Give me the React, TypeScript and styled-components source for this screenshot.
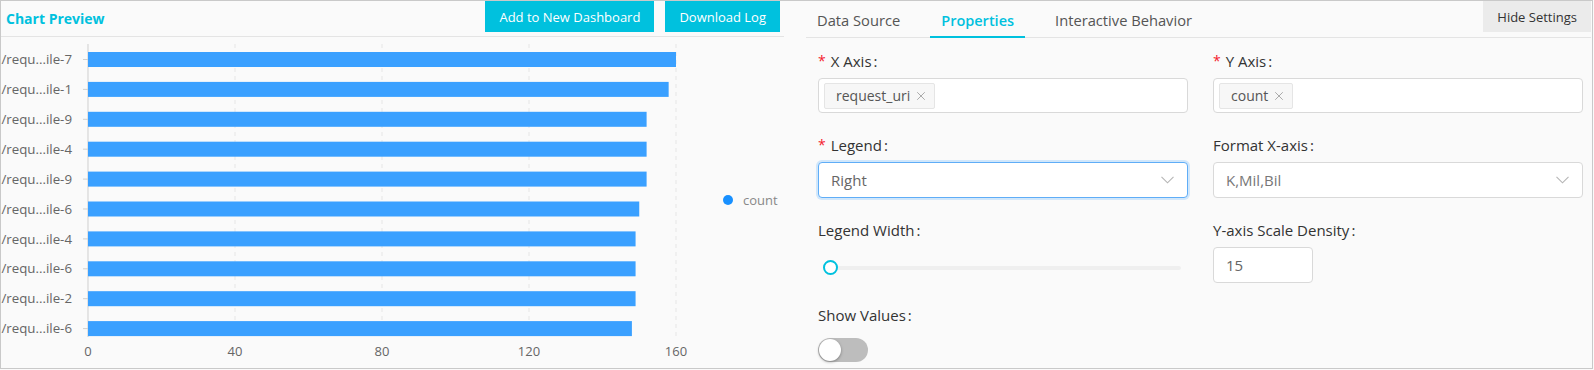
import React from 'react'
import styled, { createGlobalStyle } from 'styled-components'
import { X } from 'lucide-react'

const GlobalStyle = createGlobalStyle`
  * {
    box-sizing: border-box;
  }
  body {
    margin: 0;
    background: #fafafa;
    font-family: 'Open Sans', 'Liberation Sans', sans-serif;
    color: #333;
  }
`

const Frame = styled.div`
  display: flex;
  width: 1593px;
  height: 369px;
  border: 1px solid #c9c9c9;
  background: #fafafa;
  overflow: hidden;
`

const PreviewPane = styled.section`
  display: flex;
  flex-direction: column;
  flex: 0 0 783px;
`

const PreviewHeader = styled.div`
  display: flex;
  align-items: flex-start;
  flex: 0 0 36px;
  padding: 0 4px 0 5px;
  border-bottom: 1px solid #e4e4e4;
`

const PreviewTitle = styled.h1`
  margin: 0 auto 0 0;
  font-size: 14px;
  font-weight: 700;
  line-height: 35px;
  color: #00c1de;
`

const ActionButton = styled.button`
  height: 31px;
  margin-left: 11px;
  padding: 0 14px;
  border: 0;
  background: #00c1de;
  color: #fff;
  font-family: inherit;
  font-size: 13px;
  cursor: pointer;
`

const ChartArea = styled.div`
  flex: 1;
  min-height: 0;

  svg {
    display: block;
  }
`

const SettingsPane = styled.section`
  display: flex;
  flex-direction: column;
  flex: 1;
  min-width: 0;
  padding: 0 1px 0 22px;
`

const TabBar = styled.div`
  display: flex;
  flex: 0 0 37px;
  border-bottom: 1px solid #e4e4e4;
`

const Tab = styled.div<{ $active?: boolean }>`
  display: flex;
  align-items: center;
  margin: 0 19px -1px 0;
  padding: 3px 11px 0;
  border-bottom: 2px solid ${(p) => (p.$active ? '#00c1de' : 'transparent')};
  font-size: ${(p) => (p.$active ? '14.5px' : '14.7px')};
  font-weight: ${(p) => (p.$active ? 600 : 400)};
  color: ${(p) => (p.$active ? '#00c1de' : '#555')};
  cursor: pointer;
`

const HideButton = styled.button`
  align-self: flex-start;
  height: 31px;
  margin-left: auto;
  padding: 0 14px;
  border: 0;
  background: #ebebeb;
  color: #333;
  font-family: inherit;
  font-size: 13px;
  cursor: pointer;
`

const Form = styled.div`
  display: grid;
  grid-template-columns: 1fr 1fr;
  column-gap: 25px;
  row-gap: 22px;
  align-content: start;
  padding: 13px 8px 0 12px;
`

const FormItem = styled.div`
  display: flex;
  flex-direction: column;
  min-width: 0;
`

const Label = styled.div`
  display: flex;
  align-items: center;
  margin-bottom: 7px;
  font-size: 15px;
  line-height: 20px;
  color: #333;

  &::after {
    content: ':';
    margin-left: 2px;
  }
`

const Required = styled.span`
  margin-right: 5px;
  font-size: 14px;
  color: #f5222d;
`

const TagBox = styled.div`
  display: flex;
  align-items: center;
  height: 35px;
  padding: 0 5px;
  border: 1px solid #d9d9d9;
  border-radius: 4px;
  background: #fff;
`

const Tag = styled.span`
  display: flex;
  align-items: center;
  gap: 4px;
  height: 26px;
  padding: 0 6px 0 11px;
  border: 1px solid #e5e5e5;
  border-radius: 2px;
  background: #f7f7f7;
  font-size: 14px;
  color: #555;

  svg {
    color: #999;
  }
`

const Select = styled.div<{ $focused?: boolean; $muted?: boolean }>`
  display: flex;
  align-items: center;
  justify-content: space-between;
  height: 36px;
  padding: 0 13px 0 12px;
  border: 1px solid ${(p) => (p.$focused ? '#5fadf7' : '#d9d9d9')};
  border-radius: 4px;
  background: #fff;
  box-shadow: ${(p) => (p.$focused ? '0 0 0 2px rgba(24, 144, 255, 0.18)' : 'none')};
  font-size: 15px;
  color: ${(p) => (p.$muted ? '#777' : '#666')};
`

const NumberInput = styled.input`
  width: 100px;
  height: 36px;
  padding: 0 12px;
  border: 1px solid #d9d9d9;
  border-radius: 4px;
  background: #fff;
  font-family: inherit;
  font-size: 15px;
  color: #666;
  outline: none;
`

const ControlRow = styled.div`
  display: flex;
  align-items: center;
  height: 36px;
`

const SliderWrap = styled(ControlRow)`
  padding: 6px 7px 0 12px;
`

const Track = styled.div`
  position: relative;
  flex: 1;
  height: 4px;
  border-radius: 2px;
  background: #efefef;
`

const Thumb = styled.span`
  position: absolute;
  top: -6px;
  left: -7px;
  width: 15px;
  height: 15px;
  border: 2px solid #00c1de;
  border-radius: 50%;
  background: #fff;
`

const Switch = styled.span`
  position: relative;
  width: 50px;
  height: 24px;
  border-radius: 12px;
  background: #bdbdbd;
`

const Knob = styled.span`
  position: absolute;
  top: 1px;
  left: 1px;
  width: 22px;
  height: 22px;
  border-radius: 50%;
  background: #fff;
  box-shadow: 0 1px 3px rgba(0, 0, 0, 0.35);
`

const Chevron: React.FC = () => (
  <svg width="13" height="8" viewBox="0 0 13 8">
    <path d="M0.5 0.8 L6.5 6.8 L12.5 0.8" fill="none" stroke="#b5b5b5" strokeWidth="1.1" />
  </svg>
)

const rows = [
  { label: '/requ...ile-7', value: 160 },
  { label: '/requ...ile-1', value: 158 },
  { label: '/requ...ile-9', value: 152 },
  { label: '/requ...ile-4', value: 152 },
  { label: '/requ...ile-9', value: 152 },
  { label: '/requ...ile-6', value: 150 },
  { label: '/requ...ile-4', value: 149 },
  { label: '/requ...ile-6', value: 149 },
  { label: '/requ...ile-2', value: 149 },
  { label: '/requ...ile-6', value: 148 },
]

const X0 = 88
const UNIT = 147 / 40
const TOP = 52
const STEP = 29.9
const BAR_H = 15
const AXIS_TOP = 44
const AXIS_BOTTOM = 337

const BarChart: React.FC = () => (
  <svg width="783" height="331" fontFamily="'Open Sans', 'Liberation Sans', sans-serif">
    <g transform="translate(-1 -37)">
      {[40, 80, 120, 160].map((t) => (
        <line
          key={t}
          x1={X0 + t * UNIT}
          x2={X0 + t * UNIT}
          y1={AXIS_TOP}
          y2={AXIS_BOTTOM}
          stroke="#e6e6e6"
          strokeDasharray="4 4"
        />
      ))}
      <line x1={X0} x2={X0} y1={AXIS_TOP} y2={AXIS_BOTTOM} stroke="#cfcfcf" />
      {rows.map((r, i) => {
        const y = TOP + i * STEP
        const mid = y + BAR_H / 2
        return (
          <g key={i}>
            <line x1={X0 - 5} x2={X0} y1={mid} y2={mid} stroke="#cfcfcf" />
            <text x={72} y={mid} dy="0.35em" textAnchor="end" fontSize="13.3" fill="#666">
              {r.label}
            </text>
            <rect x={X0} y={y} width={r.value * UNIT} height={BAR_H} fill="#3aa0ff" />
          </g>
        )
      })}
      {[0, 40, 80, 120, 160].map((t) => (
        <text key={t} x={X0 + t * UNIT} y={351} dy="0.35em" textAnchor="middle" fontSize="13" fill="#666">
          {t}
        </text>
      ))}
      <circle cx={728} cy={200} r={5} fill="#1890ff" />
      <text x={743} y={200} dy="0.35em" fontSize="13" fill="#888">
        count
      </text>
    </g>
  </svg>
)

const App: React.FC = () => (
  <>
    <GlobalStyle />
    <Frame>
      <PreviewPane>
        <PreviewHeader>
          <PreviewTitle>Chart Preview</PreviewTitle>
          <ActionButton>Add to New Dashboard</ActionButton>
          <ActionButton>Download Log</ActionButton>
        </PreviewHeader>
        <ChartArea>
          <BarChart />
        </ChartArea>
      </PreviewPane>
      <SettingsPane>
        <TabBar>
          <Tab>Data Source</Tab>
          <Tab $active>Properties</Tab>
          <Tab>Interactive Behavior</Tab>
          <HideButton>Hide Settings</HideButton>
        </TabBar>
        <Form>
          <FormItem>
            <Label>
              <Required>*</Required>X Axis
            </Label>
            <TagBox>
              <Tag>
                request_uri
                <X size={14} strokeWidth={1.4} />
              </Tag>
            </TagBox>
          </FormItem>
          <FormItem>
            <Label>
              <Required>*</Required>Y Axis
            </Label>
            <TagBox>
              <Tag>
                count
                <X size={14} strokeWidth={1.4} />
              </Tag>
            </TagBox>
          </FormItem>
          <FormItem>
            <Label>
              <Required>*</Required>Legend
            </Label>
            <Select $focused>
              Right
              <Chevron />
            </Select>
          </FormItem>
          <FormItem>
            <Label>Format X-axis</Label>
            <Select $muted>
              K,Mil,Bil
              <Chevron />
            </Select>
          </FormItem>
          <FormItem>
            <Label>Legend Width</Label>
            <SliderWrap>
              <Track>
                <Thumb />
              </Track>
            </SliderWrap>
          </FormItem>
          <FormItem>
            <Label>Y-axis Scale Density</Label>
            <ControlRow>
              <NumberInput defaultValue="15" />
            </ControlRow>
          </FormItem>
          <FormItem>
            <Label>Show Values</Label>
            <ControlRow>
              <Switch>
                <Knob />
              </Switch>
            </ControlRow>
          </FormItem>
        </Form>
      </SettingsPane>
    </Frame>
  </>
)

export default App
